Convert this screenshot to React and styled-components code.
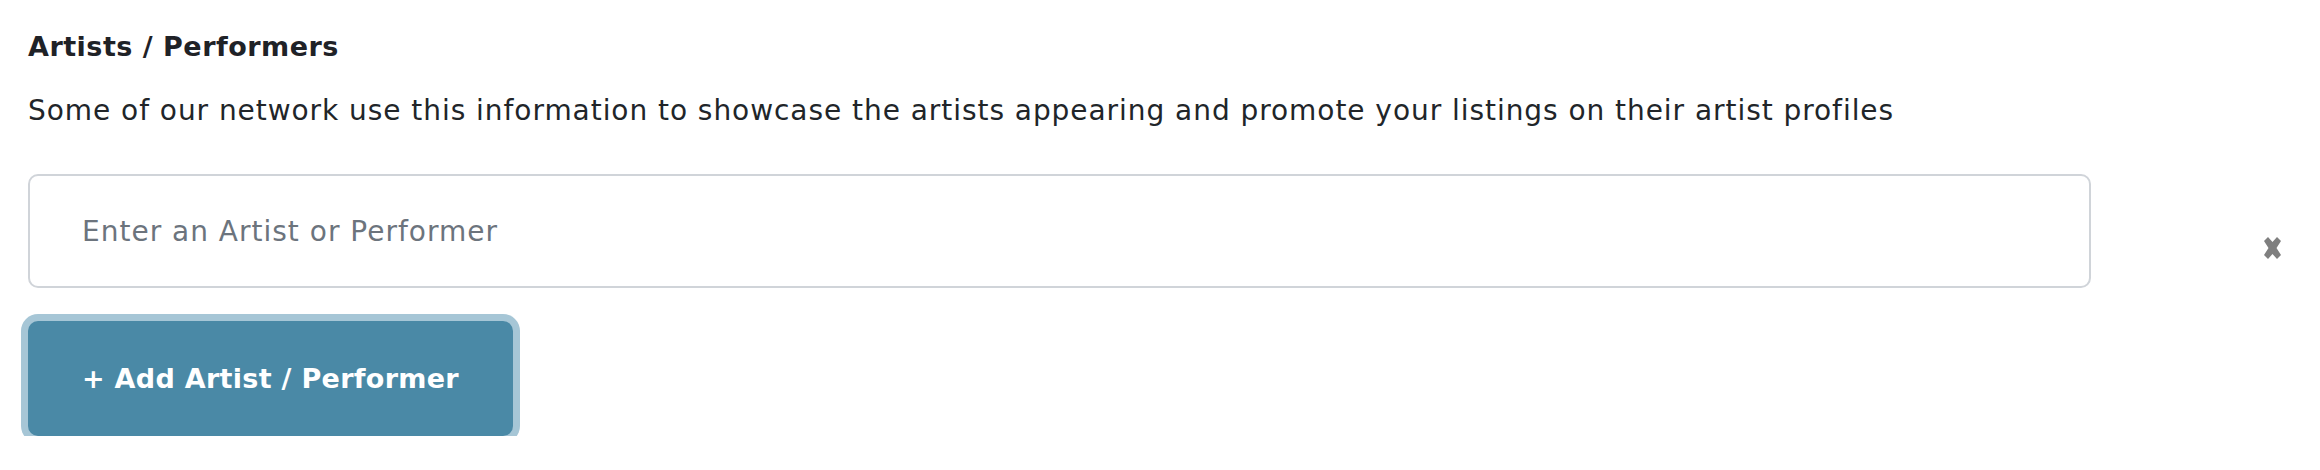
import styled, { createGlobalStyle } from "styled-components";

const GlobalStyle = createGlobalStyle`
  body {
    margin: 0;
    background: #ffffff;
    font-family: "DejaVu Sans", "Noto Sans", sans-serif;
    color: #212529;
  }
`;

const Section = styled.section`
  padding: 26px 0 0 28px;
  width: 2320px;
  box-sizing: border-box;
`;

const Title = styled.h3`
  margin: 0;
  font-size: 27px;
  line-height: 42px;
  font-weight: 700;
  letter-spacing: 0.5px;
  color: #1f2227;
`;

const Description = styled.p`
  margin: 22px 0 0;
  font-size: 28px;
  line-height: 42px;
  font-weight: 400;
  letter-spacing: 0.95px;
  color: #212529;
`;

const Row = styled.div`
  display: flex;
  align-items: flex-start;
  margin-top: 42px;
`;

const Input = styled.input`
  flex: 1;
  height: 114px;
  box-sizing: border-box;
  border: 2px solid #d0d4d9;
  border-radius: 10px;
  padding: 0 52px;
  font-family: inherit;
  font-size: 28px;
  letter-spacing: 1px;
  color: #212529;
  outline: none;

  &::placeholder {
    color: #6c747d;
  }
`;

const RemoveCell = styled.div`
  width: 229px;
  display: flex;
  justify-content: flex-end;
  padding: 63px 37px 0 0;
  box-sizing: border-box;
`;

const RemoveButton = styled.button`
  border: none;
  background: none;
  padding: 0;
  width: 21px;
  height: 22px;
  cursor: pointer;
  color: #7f7f7f;

  svg {
    display: block;
  }
`;

const AddButton = styled.button`
  margin-top: 33px;
  height: 115px;
  padding: 0 54px;
  border: none;
  border-radius: 10px;
  background: #4a89a6;
  box-shadow: 0 0 0 7px #a6c6d6;
  color: #ffffff;
  font-family: inherit;
  font-size: 27px;
  font-weight: 700;
  letter-spacing: 0.3px;
  cursor: pointer;
`;

const CrossIcon = () => (
  <svg width="21" height="22" viewBox="0 0 21 22" fill="currentColor">
    <path d="M2 4 L6 0 L10.5 5 L15 0 L19 4 L14.5 11 L19 18 L15 22 L10.5 17 L6 22 L2 18 L6.5 11 Z" />
  </svg>
);

export default function App() {
  return (
    <>
      <GlobalStyle />
      <Section>
        <Title>Artists / Performers</Title>
        <Description>
          Some of our network use this information to showcase the artists
          appearing and promote your listings on their artist profiles
        </Description>
        <Row>
          <Input type="text" placeholder="Enter an Artist or Performer" />
          <RemoveCell>
            <RemoveButton aria-label="Remove">
              <CrossIcon />
            </RemoveButton>
          </RemoveCell>
        </Row>
        <AddButton>+ Add Artist / Performer</AddButton>
      </Section>
    </>
  );
}
